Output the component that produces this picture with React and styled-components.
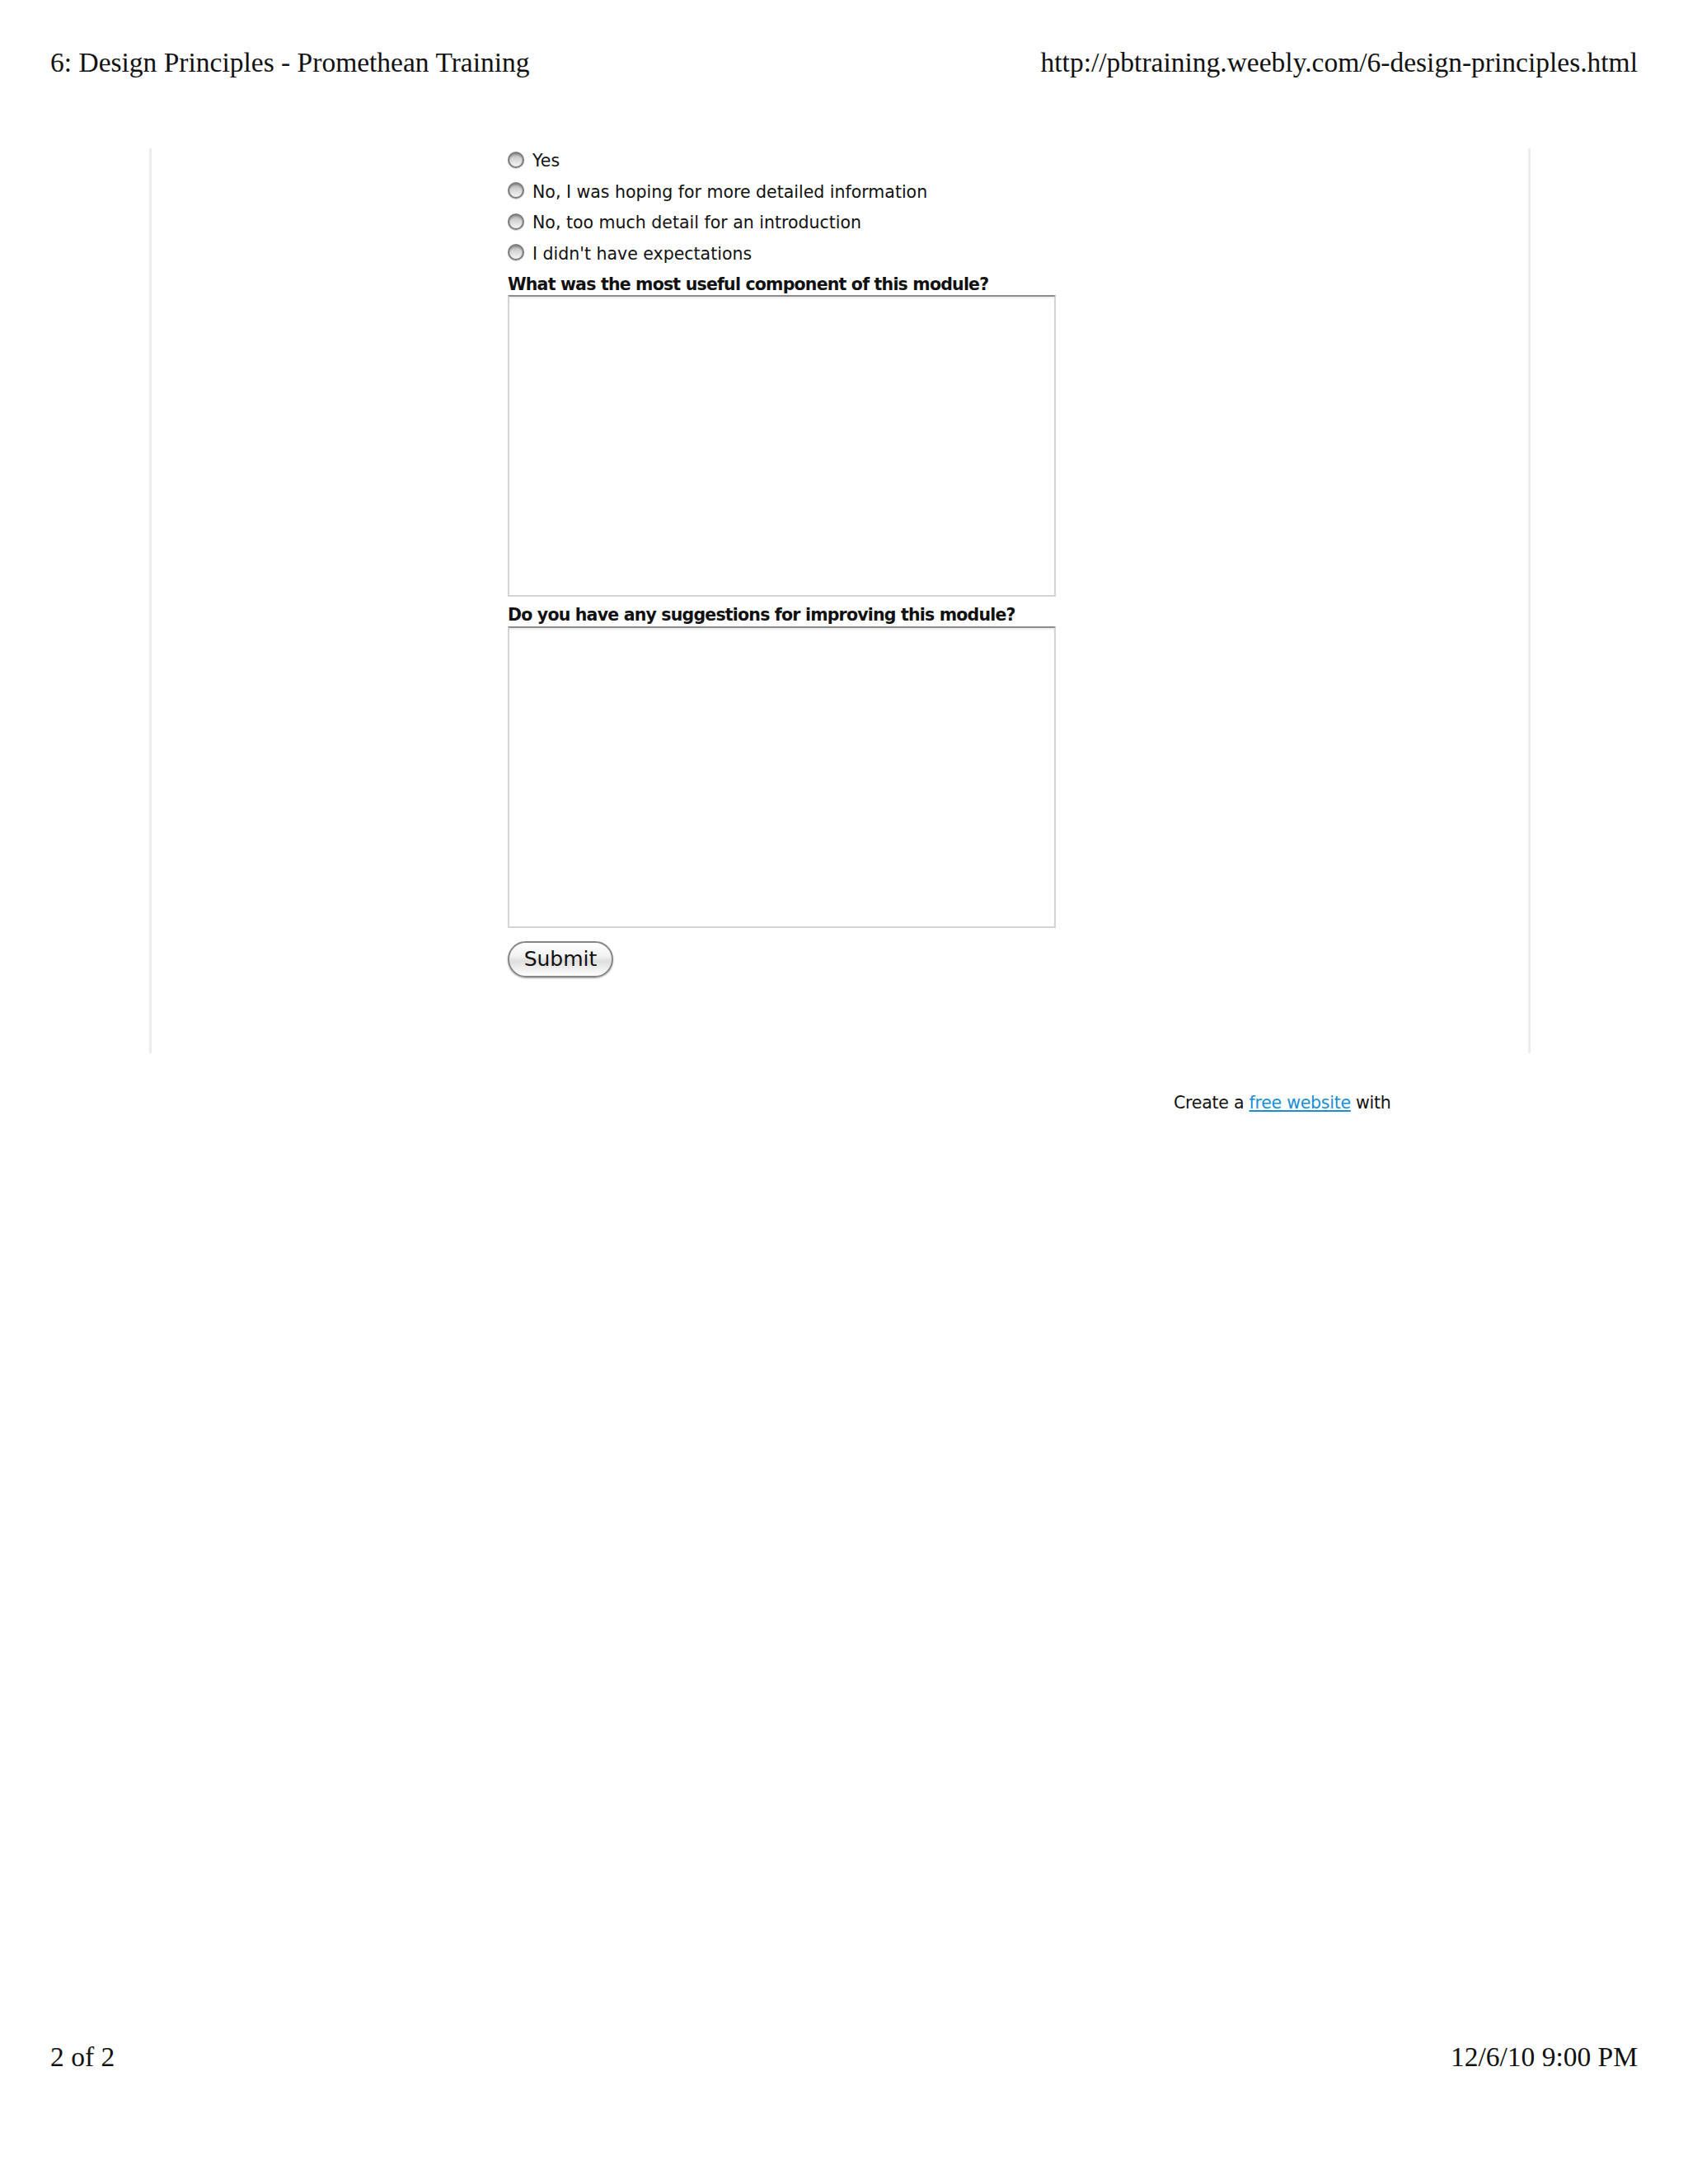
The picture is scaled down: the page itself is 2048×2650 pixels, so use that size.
import React from 'react'
import styled, { createGlobalStyle } from 'styled-components'

const GlobalStyle = createGlobalStyle`
	html, body {
		margin: 0;
		padding: 0;
		background: #fff;
	}
`

const sans = `'DejaVu Sans', Verdana, sans-serif`
const serif = `'Liberation Serif', 'Times New Roman', serif`

const Page = styled('div')`
	display: flex;
	flex-direction: column;
	width: 2048px;
	min-height: 2650px;
	box-sizing: border-box;
	background: #fff;
	color: #000;
`

const PrintBar = styled('div')`
	display: flex;
	justify-content: space-between;
	padding: ${({ bottom }) => (bottom ? '0 61px 134px 61px' : '56px 61px 0 61px')};
	margin-top: ${({ bottom }) => (bottom ? 'auto' : '0')};
	font-family: ${serif};
	font-size: 33.5px;
	line-height: 40px;
	color: #111;
`

const Frame = styled('div')`
	width: 1676px;
	height: 1098px;
	margin: 84px 0 0 181px;
	padding: 0 0 0 432px;
	box-sizing: border-box;
	border-left: 3px solid #ececec;
	border-right: 3px solid #ececec;
`

const Form = styled('form')`
	display: flex;
	flex-direction: column;
	width: 665px;
	font-family: ${sans};
	font-size: 20.5px;
	color: #111;
`

const Options = styled('div')`
	display: flex;
	flex-direction: column;
	gap: 7.5px;
`

const Option = styled('label')`
	display: flex;
	align-items: center;
	gap: 10px;
	height: 30px;
	line-height: 30px;
	white-space: nowrap;
`

const Radio = styled('input')`
	appearance: none;
	margin: -3px 0 0 0;
	width: 20px;
	height: 20px;
	flex: none;
	box-sizing: border-box;
	border-radius: 50%;
	border: 2px solid #7c7c7c;
	background: linear-gradient(#a9a9a9 0%, #d4d4d4 40%, #f6f6f6 100%);
	box-shadow: inset 0 1px 2px rgba(0, 0, 0, 0.3), 0 1px 1px rgba(0, 0, 0, 0.2);
`

const Question = styled('div')`
	margin-top: ${({ first }) => (first ? '9.5px' : '9px')};
	font-weight: 700;
	line-height: 26px;
	letter-spacing: -0.8px;
	white-space: nowrap;
`

const Answer = styled('textarea')`
	display: block;
	width: 665px;
	height: 366px;
	margin-top: ${({ gap }) => gap}px;
	box-sizing: border-box;
	resize: none;
	border: 2px solid #d4d4d4;
	border-top-color: #8c8c8c;
	box-shadow: inset 0 2px 2px rgba(0, 0, 0, 0.07);
	background: #fff;
	outline: none;
`

const SubmitButton = styled('button')`
	align-self: flex-start;
	margin-top: 16px;
	width: 128px;
	height: 44px;
	padding: 0 0 2px;
	box-sizing: border-box;
	border-radius: 22px;
	border: 2px solid #868686;
	background: linear-gradient(#ffffff 0%, #f2f2f2 40%, #dedede 55%, #f3f3f3 85%, #ffffff 100%);
	box-shadow: 0 1px 2px rgba(0, 0, 0, 0.35), inset 0 1px 1px rgba(255, 255, 255, 0.9);
	font-family: ${sans};
	font-size: 25px;
	line-height: 1;
	color: #111;
`

const Credit = styled('div')`
	margin: 45px 0 0 1424px;
	font-family: ${sans};
	font-size: 20.5px;
	line-height: 30px;
	letter-spacing: -0.25px;
	color: #111;

	a {
		color: #1a8ed4;
		text-decoration: underline;
	}
`

const options = [
	'Yes',
	'No, I was hoping for more detailed information',
	'No, too much detail for an introduction',
	"I didn't have expectations"
]

const App = () => (
	<>
		<GlobalStyle />
		<Page>
			<PrintBar>
				<span>6: Design Principles - Promethean Training</span>
				<span>http://pbtraining.weebly.com/6-design-principles.html</span>
			</PrintBar>

			<Frame>
				<Form onSubmit={e => e.preventDefault()}>
					<Options>
						{options.map(text => (
							<Option key={text}>
								<Radio type="radio" name="expectations" />
								{text}
							</Option>
						))}
					</Options>

					<Question first>What was the most useful component of this module?</Question>
					<Answer gap={0} />

					<Question>Do you have any suggestions for improving this module?</Question>
					<Answer gap={1} />

					<SubmitButton type="submit">Submit</SubmitButton>
				</Form>
			</Frame>

			<Credit>
				Create a <a href="#">free website</a> with
			</Credit>

			<PrintBar bottom>
				<span>2 of 2</span>
				<span>12/6/10 9:00 PM</span>
			</PrintBar>
		</Page>
	</>
)

export default App
